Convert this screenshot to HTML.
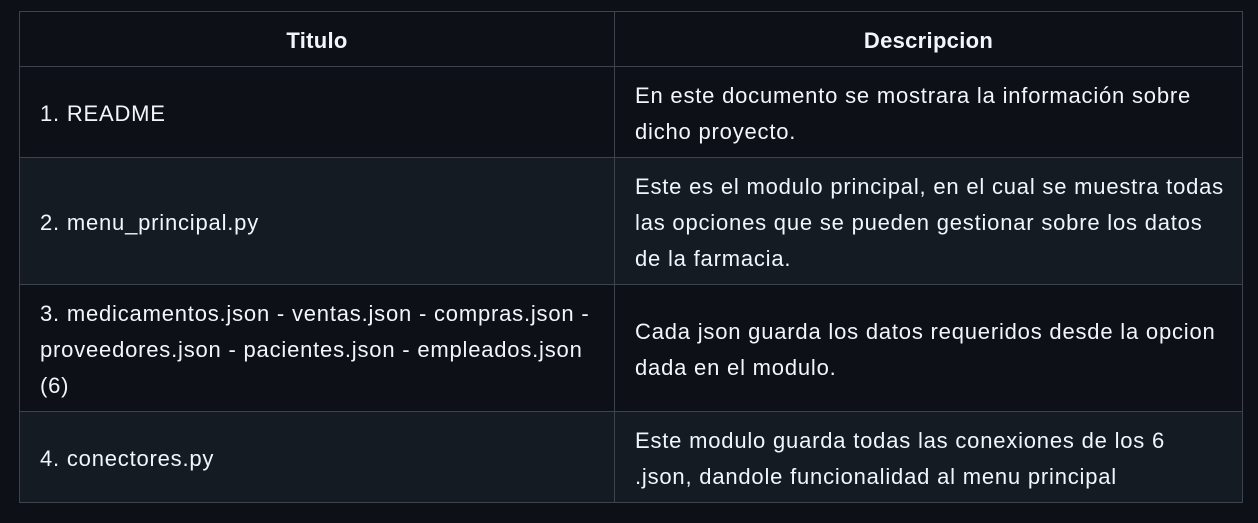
<!DOCTYPE html>
<html><head><meta charset="utf-8"><style>
html,body{margin:0;padding:0;background:#0d1117;width:1258px;height:523px;overflow:hidden}
table{position:absolute;left:19px;top:11px;border-collapse:collapse;font-family:"Liberation Sans",sans-serif;font-size:22px;letter-spacing:0.8px;color:#f0f6fc;line-height:36px;table-layout:fixed;width:1223px}
td,th{border:1px solid #3d444d;padding:3px 20px 0 20px;vertical-align:middle;text-align:left;white-space:nowrap}
th{font-weight:bold;text-align:center;height:51px;letter-spacing:0.3px}
tr.a{background:#0d1117}tr.b{background:#151b23}
</style></head><body>
<table>
<colgroup><col style="width:595px"><col style="width:628px"></colgroup>
<tr class="a"><th>Titulo</th><th>Descripcion</th></tr>
<tr class="a" style="height:91px"><td>1. README</td><td>En este documento se mostrara la información sobre<br>dicho proyecto.</td></tr>
<tr class="b" style="height:127px"><td>2. menu_principal.py</td><td>Este es el modulo principal, en el cual se muestra todas<br>las opciones que se pueden gestionar sobre los datos<br>de la farmacia.</td></tr>
<tr class="a" style="height:127px"><td>3. medicamentos.json - ventas.json - compras.json -<br>proveedores.json - pacientes.json - empleados.json<br>(6)</td><td>Cada json guarda los datos requeridos desde la opcion<br>dada en el modulo.</td></tr>
<tr class="b" style="height:91px"><td>4. conectores.py</td><td>Este modulo guarda todas las conexiones de los 6<br>.json, dandole funcionalidad al menu principal</td></tr>
</table>
</body></html>
